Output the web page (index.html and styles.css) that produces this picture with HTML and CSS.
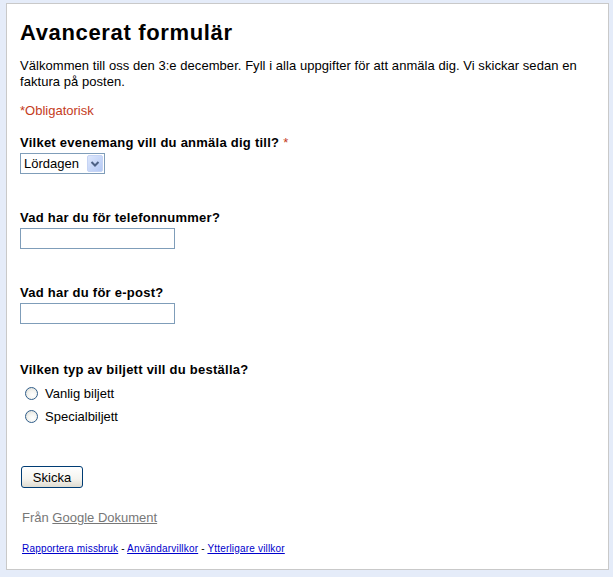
FILE: index.html
```html
<!DOCTYPE html>
<html lang="sv">
<head>
<meta charset="utf-8">
<title>Avancerat formulär</title>
<link rel="stylesheet" href="styles.css">
</head>
<body>
<div class="form-box">
  <h1 class="title">Avancerat formulär</h1>
  <p class="intro">Välkommen till oss den 3:e december. Fyll i alla uppgifter för att anmäla dig. Vi skickar sedan en faktura på posten.</p>
  <p class="required-note">*Obligatorisk</p>

  <div class="question">
    <label class="q-label" for="ev">Vilket evenemang vill du anmäla dig till? <span class="req">*</span></label>
    <div class="select-wrap">
      <select id="ev" class="select"><option>Lördagen</option><option>Söndagen</option></select>
      <svg class="select-btn" width="16" height="17" viewBox="0 0 16 17" aria-hidden="true">
        <defs>
          <linearGradient id="sb" x1="0" y1="0" x2="1" y2="1">
            <stop offset="0" stop-color="#dfe8fc"/>
            <stop offset="1" stop-color="#b3c8f5"/>
          </linearGradient>
        </defs>
        <rect x="0.5" y="0.5" width="15" height="16" rx="1.5" fill="url(#sb)" stroke="#c6d4f4"/>
        <path d="M4.5 7 L8 10.5 L11.5 7" fill="none" stroke="#4d6185" stroke-width="2"/>
      </svg>
    </div>
  </div>

  <div class="question">
    <label class="q-label" for="tel">Vad har du för telefonnummer?</label>
    <input id="tel" class="text-input" type="text">
  </div>

  <div class="question">
    <label class="q-label" for="mail">Vad har du för e-post?</label>
    <input id="mail" class="text-input" type="text">
  </div>

  <div class="question radios">
    <div class="q-label">Vilken typ av biljett vill du beställa?</div>
    <label class="radio-row"><input class="radio" type="radio" name="bil"><span>Vanlig biljett</span></label>
    <label class="radio-row"><input class="radio" type="radio" name="bil"><span>Specialbiljett</span></label>
  </div>

  <button class="submit" type="button">Skicka</button>

  <p class="from">Från <a href="#" class="from-link">Google Dokument</a></p>

  <p class="footer-links"><a href="#">Rapportera missbruk</a> - <a href="#">Användarvillkor</a> - <a href="#">Ytterligare villkor</a></p>
</div>
</body>
</html>
```
FILE: styles.css
```css
html, body {
  margin: 0;
  padding: 0;
}
body {
  background: #e5ecf9;
  padding: 3px 4px 7px 6px;
  font-family: "Liberation Sans", Arial, sans-serif;
  font-size: 13px;
  line-height: 16px;
  color: #000;
}
.form-box {
  background: #fff;
  border: 1px solid #c9c9c9;
  padding: 16px 13px 13px 13px;
  height: 536px;
}
.title {
  margin: 0;
  font-size: 22px;
  line-height: 26px;
  font-weight: bold;
  letter-spacing: 0.65px;
}
.intro {
  margin: 12px 0 0 0;
  letter-spacing: 0.05px;
}
.required-note {
  margin: 13px 0 0 0;
  color: #c43b1d;
}
.question {
  margin-top: 16px;
  display: flex;
  flex-direction: column;
  align-items: flex-start;
}
.question + .question {
  margin-top: 36px;
}
.question.radios {
  margin-top: 38px;
}
.q-label {
  font-weight: bold;
  letter-spacing: 0.25px;
  margin-bottom: 2px;
}
.req {
  color: #c43b1d;
  font-weight: normal;
}
.select-wrap {
  position: relative;
  display: inline-block;
}
.select {
  appearance: none;
  -webkit-appearance: none;
  width: 85px;
  height: 21px;
  box-sizing: border-box;
  border: 1px solid #7f9db9;
  border-radius: 0;
  background: #fff;
  font: 13px "Liberation Sans", Arial, sans-serif;
  padding: 0 0 0 3px;
  color: #000;
  margin: 0;
}
.select-btn {
  position: absolute;
  right: 2px;
  top: 2px;
  pointer-events: none;
}
.text-input {
  width: 155px;
  height: 21px;
  box-sizing: border-box;
  border: 1px solid #7f9db9;
  margin: 0;
  padding: 1px 3px;
  font: 13px "Liberation Sans", Arial, sans-serif;
}
.radios .q-label {
  margin-bottom: 4px;
}
.radio-row {
  display: flex;
  align-items: center;
  height: 23px;
}
.radio {
  appearance: none;
  -webkit-appearance: none;
  width: 13px;
  height: 13px;
  box-sizing: border-box;
  margin: 0 7px 0 5px;
  border: 1px solid #2f5d8a;
  border-radius: 50%;
  background: radial-gradient(circle at 60% 65%, #ffffff 0%, #f4f4f0 45%, #d6d6cf 100%);
}
.submit {
  display: block;
  margin: 38px 0 0 1px;
  width: 62px;
  height: 22px;
  padding: 0;
  border: 1px solid #003c74;
  border-radius: 3px;
  background: linear-gradient(#ffffff 0%, #f5f4ef 60%, #dedbd0 100%);
  font: 13px "Liberation Sans", Arial, sans-serif;
  color: #000;
}
.from {
  margin: 22px 0 0 2px;
  color: #777;
}
.from-link {
  color: #777;
}
.footer-links {
  margin: 17px 0 0 2px;
  font-size: 10px;
  line-height: 12px;
  letter-spacing: 0.18px;
}
.footer-links a {
  color: #0000cc;
}
```
